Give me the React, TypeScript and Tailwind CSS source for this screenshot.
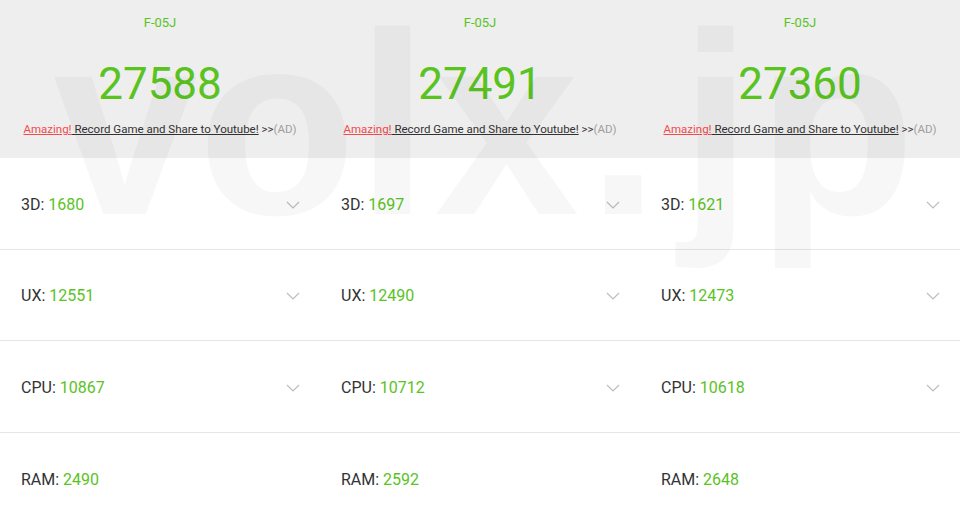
const results = [
  { device: 'F-05J', total: '27588', d3: '1680', ux: '12551', cpu: '10867', ram: '2490' },
  { device: 'F-05J', total: '27491', d3: '1697', ux: '12490', cpu: '10712', ram: '2592' },
  { device: 'F-05J', total: '27360', d3: '1621', ux: '12473', cpu: '10618', ram: '2648' },
];

function Chevron() {
  return (
    <svg width="14" height="8" viewBox="0 0 14 8" className="shrink-0">
      <polyline points="1,1 7,7 13,1" fill="none" stroke="#bdbdbd" strokeWidth="1.2" />
    </svg>
  );
}

function Row({ label, value, last }: { label: string; value: string; last?: boolean }) {
  return (
    <div
      className={`flex h-[91.5px] items-center justify-between pl-[21px] pr-[20px] pt-[3px] ${
        last ? '' : 'border-b border-[#e6e6e6]'
      }`}
    >
      <div className="text-[16px] text-[#333333]">
        {label}: <span className="text-[#5ac31f]">{value}</span>
      </div>
      {!last && <Chevron />}
    </div>
  );
}

function Column({ r }: { r: (typeof results)[number] }) {
  return (
    <div className="flex flex-col">
      <div className="flex h-[158px] flex-col items-center bg-[#eeeeee] pt-[15px]">
        <div className="text-[13px] leading-[16px] text-[#5ac31f]">{r.device}</div>
        <div className="mt-[25px] text-[44px] leading-[56px] text-[#5ac31f]">{r.total}</div>
        <div className="mt-[9px] whitespace-nowrap text-[11.5px] leading-[16px]">
          <span className="text-[#f44a4a] underline">Amazing!</span>
          <span className="text-[#333333] underline"> Record Game and Share to Youtube!</span>
          <span className="text-[#333333]"> &gt;&gt;</span>
          <span className="text-[#9e9e9e]">(AD)</span>
        </div>
      </div>
      <Row label="3D" value={r.d3} />
      <Row label="UX" value={r.ux} />
      <Row label="CPU" value={r.cpu} />
      <Row label="RAM" value={r.ram} last />
    </div>
  );
}

export default function App() {
  return (
    <div className="relative h-[530px] w-[960px] overflow-hidden bg-white font-['Roboto',sans-serif]">
      <div className="grid grid-cols-3">
        {results.map((r, i) => (
          <Column key={i} r={r} />
        ))}
      </div>
      {/* watermark */}
      <div className="pointer-events-none absolute left-[53px] top-[-6px] whitespace-nowrap font-['Liberation_Sans',sans-serif] text-[260px] font-bold leading-none text-black/[0.03]">
        vol<span className="ml-[6px]">x</span>
        <span className="ml-[8px]">.</span>
        <span className="ml-[20px]">j</span>
        <span className="ml-[5px]">p</span>
      </div>
    </div>
  );
}
